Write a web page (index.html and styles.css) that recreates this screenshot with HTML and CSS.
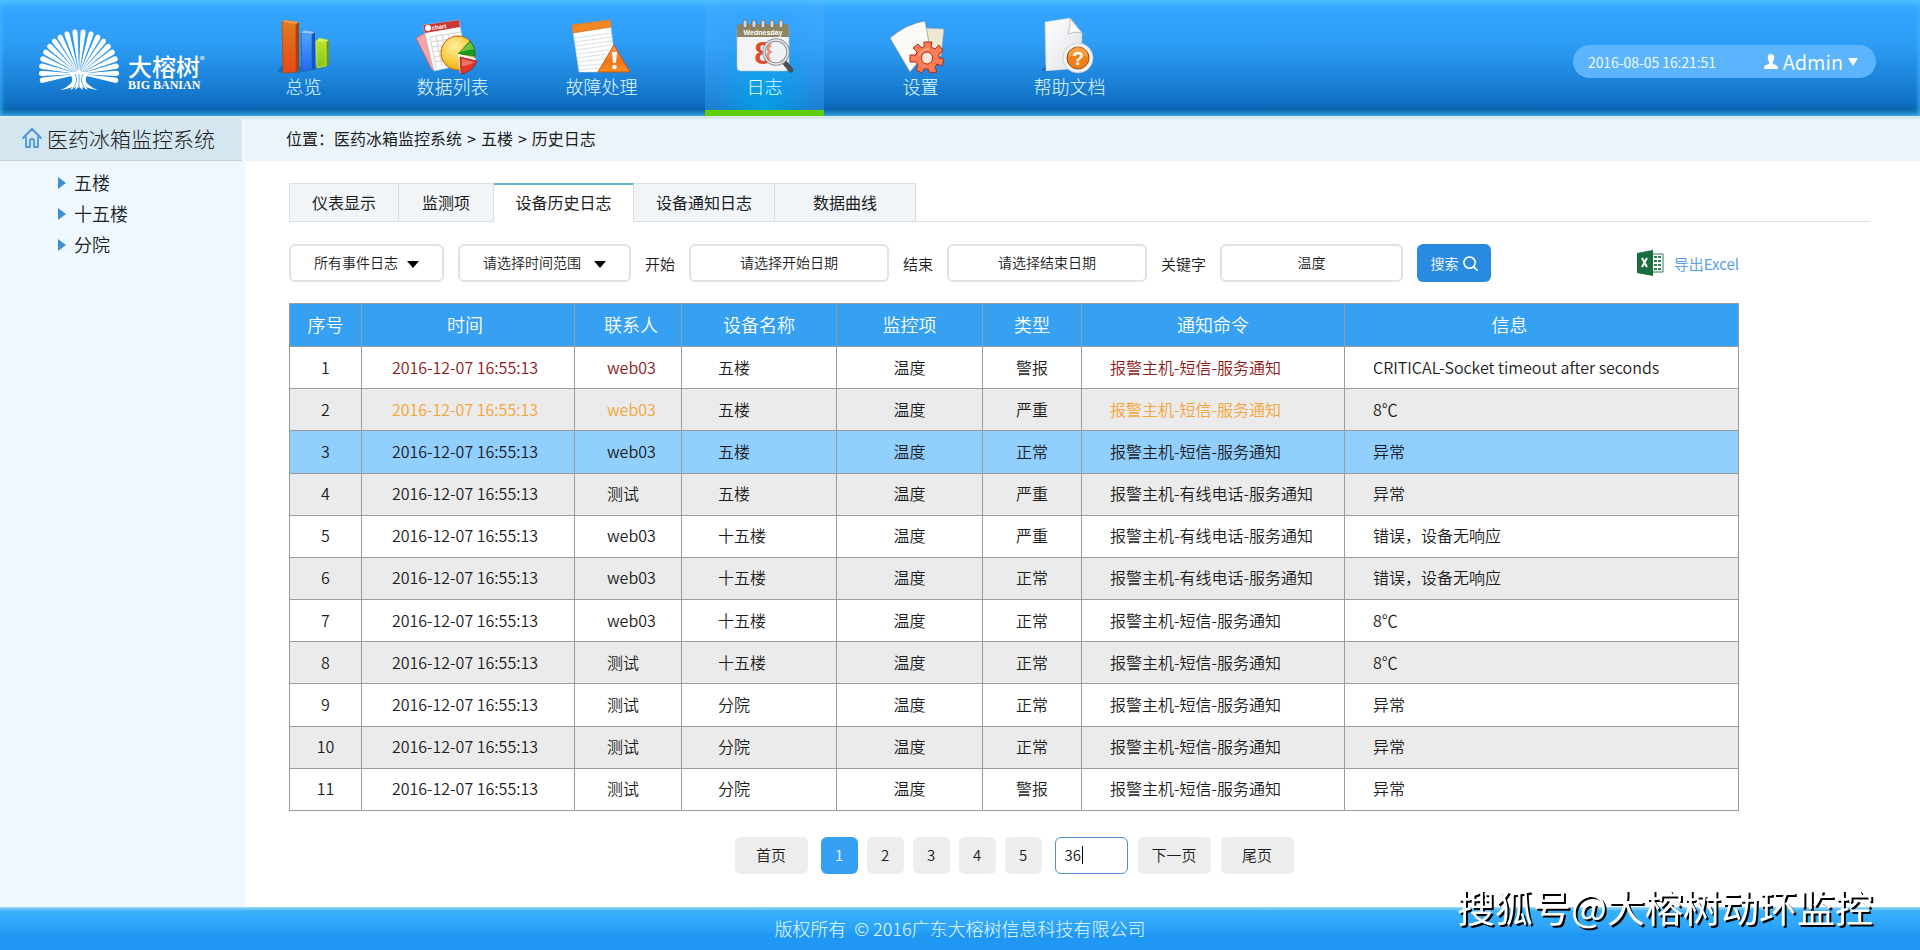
FILE: index.html
```html
<!DOCTYPE html>
<html lang="zh-CN">
<head>
  <meta charset="UTF-8" />
  <meta name="viewport" content="width=device-width, initial-scale=1.0" />
  <title>医药冰箱监控系统</title>
  <link rel="stylesheet" href="styles.css">
</head>
<body>
  <!-- 头部 -->
  <header class="header">
    <a class="logo" href="#">
      <svg class="logo-tree" viewBox="0 0 82 64" aria-hidden="true">
        <defs>
          <path id="leaf" d="M-.3-4 L-2.6-39 a2.6 3.2 0 0 1 5.2 0 L.3-4z" />
        </defs>
        <g fill="#fff" transform="translate(41 47) scale(.98 1.06)">
          <use href="#leaf" transform="rotate(-99) scale(.96)" />
          <use href="#leaf" transform="rotate(-89) scale(.97)" />
          <use href="#leaf" transform="rotate(-79) scale(.98)" />
          <use href="#leaf" transform="rotate(-69)" />
          <use href="#leaf" transform="rotate(-59)" />
          <use href="#leaf" transform="rotate(-49)" />
          <use href="#leaf" transform="rotate(-39)" />
          <use href="#leaf" transform="rotate(-29)" />
          <use href="#leaf" transform="rotate(-18)" />
          <use href="#leaf" transform="rotate(-6)" />
          <use href="#leaf" transform="rotate(6)" />
          <use href="#leaf" transform="rotate(18)" />
          <use href="#leaf" transform="rotate(29)" />
          <use href="#leaf" transform="rotate(39)" />
          <use href="#leaf" transform="rotate(49)" />
          <use href="#leaf" transform="rotate(59)" />
          <use href="#leaf" transform="rotate(69)" />
          <use href="#leaf" transform="rotate(79) scale(.98)" />
          <use href="#leaf" transform="rotate(89) scale(.97)" />
          <use href="#leaf" transform="rotate(99) scale(.96)" />
        </g>
        <path fill="#fff" d="M30 45 Q36 47 41 42 Q46 47 52 45 Q44 53 51 58 Q54 61 60 63 Q52 62 48 60 L50 63 L44 60 L45 63 L41 60 L37 63 L38 60 L32 63 L34 60 Q30 62 22 63 Q28 61 31 58 Q38 53 30 45z" />
        <path fill="none" stroke="#2288dc" stroke-width=".7" d="M37 47 Q41 54 35 61 M45 47 Q41 54 47 61 M41 47 V60" />
      </svg>
      <span class="logo-text">
        <span class="logo-cn">大榕树<sup>®</sup></span>
        <span class="logo-en">BIG BANIAN</span>
      </span>
    </a>

    <nav class="nav">
      <a href="#">
        <svg class="nav-icon" viewBox="0 0 70 56" aria-hidden="true">
          <defs>
            <linearGradient id="barOrange" x1="0" y1="0" x2="0" y2="1"><stop offset="0" stop-color="#e07a1c" /><stop offset="1" stop-color="#e8481a" /></linearGradient>
            <linearGradient id="barBlue" x1="0" y1="0" x2="0" y2="1"><stop offset="0" stop-color="#4fa4fb" /><stop offset="1" stop-color="#2468f2" /></linearGradient>
            <linearGradient id="barGreen" x1="0" y1="0" x2="0" y2="1"><stop offset="0" stop-color="#b9e32c" /><stop offset="1" stop-color="#86c516" /></linearGradient>
          </defs>
          <path fill="#0c4f94" opacity=".45" d="M8 54 L12 48 H59 L55 50 L29 55z" />
          <path fill="#a8400e" d="M13 4 L16 2 L30 4 V52 L27 55z" />
          <path fill="url(#barOrange)" stroke="#b4460e" stroke-width=".8" d="M13 4 L27 5 V54 L14 55z" />
          <path fill="#f0a050" d="M13 4 L16 2 L30 4 L27 6z" />
          <path fill="#1c50b8" d="M32 15 L35 12 L46 14 V50 L43 52z" />
          <path fill="url(#barBlue)" stroke="#2560c8" stroke-width=".8" d="M32 15 L43 16 V51 L33 53z" />
          <path fill="#8cc8ff" d="M32 15 L35 12 L46 14 L43 16z" />
          <path fill="#6a9a10" d="M47 23 L50 20 L60 22 V47 L57 49z" />
          <path fill="url(#barGreen)" stroke="#d6f060" stroke-width=".8" d="M47 23 L57 24 V48 L48 50z" />
          <path fill="#d4ee60" d="M47 23 L50 20 L60 22 L57 24z" />
        </svg>
        <span>总览</span>
      </a>
      <a href="#">
        <svg class="nav-icon" viewBox="3 0 70 56" aria-hidden="true">
          <defs>
            <radialGradient id="pie" cx=".4" cy=".3" r=".8"><stop offset="0" stop-color="#fff0a0" /><stop offset=".6" stop-color="#f8c838" /><stop offset="1" stop-color="#e89a18" /></radialGradient>
          </defs>
          <path fill="#f4a3a8" stroke="#c8505a" stroke-width=".6" d="M1 20 L10 15 L23 49 L17 52z" />
          <path fill="#fdfdfd" stroke="#b8c4d0" stroke-width=".5" d="M8 7 L44 2 L52 46 L19 53z" />
          <path fill="#c93a36" d="M8 7 L44 2 L45 9 L10 15z" />
          <path fill="none" stroke="#c9ccd4" stroke-width=".8" d="M15 19 L46 14 M16 24 L47 19 M17 29 L48 24 M18 34 L40 30 M19 39 L40 35 M20 44 L40 40 M15 19 L21 50 M21 18 L27 48 M27 17 L33 47 M33 16 L37 36 M39 15 L42 30" />
          <circle cx="13" cy="10" r="3" fill="#fff" />
          <text x="17" y="12" class="icon-chart-text" transform="rotate(-8 17 12)">chart</text>
          <circle cx="43" cy="35" r="17" fill="url(#pie)" stroke="#c45a10" />
          <path fill="#159a1e" stroke="#0c7414" stroke-width=".6" d="M43 36 L55 23 Q61 29 60 38z" />
          <path fill="#a6dc5a" opacity=".6" d="M45 34 L55 24 Q58 27 59 31z" />
          <path fill="#fff" d="M43 36 L60 40 L62 44 L45 56z" />
          <path fill="#e0352b" stroke="#9c1812" stroke-width=".8" d="M45 39 L62 43 Q58 54 46 56z" />
          <path fill="#f48a80" opacity=".7" d="M47 41 L59 44 Q56 47 47 48z" />
        </svg>
        <span>数据列表</span>
      </a>
      <a href="#">
        <svg class="nav-icon" viewBox="0 0 70 56" aria-hidden="true">
          <defs>
            <linearGradient id="warn" x1="0" y1="0" x2="0" y2="1"><stop offset="0" stop-color="#ff9d5c" /><stop offset=".6" stop-color="#f4731a" /><stop offset="1" stop-color="#f8901c" /></linearGradient>
          </defs>
          <path fill="#fff" stroke="#c8ccd2" stroke-width=".5" d="M5 7 L43 2 L49 50 L34 54 L12 54z" />
          <path fill="#f28722" stroke="#c96410" stroke-width=".6" d="M5 7 L43 2 L44 9 L6 15z" />
          <path fill="none" stroke="#d5dae0" stroke-width=".9" d="M8 20 L44 15 M8 24 L45 19 M9 28 L45 23 M9 32 L44 27 M10 36 L42 32 M10 40 L40 36 M11 44 L37 41 M11 48 L35 46 M12 52 L33 50" />
          <path fill="url(#warn)" stroke="#c85208" stroke-linejoin="round" d="M47 27 L63 54 H31z" />
          <path fill="#fff" d="M45 34 h5 l-1 11 h-3z" />
          <circle cx="47.500" cy="49" r="2.200" fill="#fff" />
        </svg>
        <span>故障处理</span>
      </a>
      <a href="#" class="active">
        <svg class="nav-icon" viewBox="0 0 70 56" aria-hidden="true">
          <rect x="7" y="8" width="52" height="45" rx="4" fill="#f4f4f6" stroke="#b9bec4" stroke-width=".6" />
          <path fill="#8f8560" d="M7 19 V10 Q7 6 11 6 H55 Q59 6 59 10 V19z" />
          <g fill="#d4d8de" stroke="#59616b" stroke-width=".8">
            <rect x="13" y="2" width="4" height="8" rx="2" />
            <rect x="22" y="2" width="4" height="8" rx="2" />
            <rect x="31" y="2" width="4" height="8" rx="2" />
            <rect x="40" y="2" width="4" height="8" rx="2" />
            <rect x="49" y="2" width="4" height="8" rx="2" />
          </g>
          <text x="33" y="17" class="icon-day-text">Wednesday</text>
          <text x="33" y="46" class="icon-date-text">8</text>
          <path stroke="#4e5054" stroke-width="5" stroke-linecap="round" d="M55 45 L61 52" />
          <circle cx="46" cy="34" r="12" fill="#eef2f6" stroke="#8d9196" stroke-width="3.500" />
          <circle cx="46" cy="34" r="12" fill="none" stroke="#e6e8ea" stroke-width="1.500" />
          <path fill="none" stroke="#e8694a" stroke-width="3" opacity=".7" d="M41 27 Q36 30 40 34 Q35 38 40 42" />
        </svg>
        <span>日志</span>
      </a>
      <a href="#">
        <svg class="nav-icon" viewBox="0 0 70 56" aria-hidden="true">
          <path fill="#efe8d2" stroke="#8c9aa4" stroke-width=".5" d="M40 10 L58 11 L55 38 L40 42z" />
          <path fill="#fcfaf4" stroke="#6e8496" stroke-width=".6" d="M4 20 Q20 6 39 3 L44 30 L24 54 Q12 34 4 20z" />
          <path fill="#f77e55" stroke="#b3261a" stroke-linejoin="round" d="M38 24 L46 24 L45 29 L49 31 L53 27 L57 33 L53 36 L53 40 L58 41 L56 48 L51 46 L49 49 L51 54 L44 55 L42 51 L38 51 L36 55 L30 52 L32 47 L30 44 L24 44 L24 37 L30 37 L31 34 L27 30 L32 26 L36 30 L38 29z" />
          <ellipse cx="41" cy="40" rx="5.500" ry="6" fill="#f5ead8" stroke="#b3261a" />
          <path fill="none" stroke="#ffc2a0" stroke-width="1" d="M33 38 Q35 31 43 31" />
        </svg>
        <span>设置</span>
      </a>
      <a href="#">
        <svg class="nav-icon" viewBox="2 0 70 56" aria-hidden="true">
          <defs>
            <linearGradient id="page" x1="0" y1="0" x2="1" y2="1"><stop offset="0" stop-color="#fff" /><stop offset="1" stop-color="#dde1e6" /></linearGradient>
          </defs>
          <path fill="#0c4f94" opacity=".5" d="M8 52 L14 46 L40 49 L14 54z" />
          <path fill="url(#page)" stroke="#c8ced6" stroke-width=".5" d="M12 4 L37 0 L49 15 L48 50 L13 53z" />
          <path fill="#fafafa" stroke="#a8aeb6" stroke-width=".7" d="M37 0 L49 15 Q42 13 35 16 Q38 8 37 0z" />
          <circle cx="45" cy="40" r="15" fill="#f2f2f2" stroke="#bfc4ca" stroke-width=".6" />
          <circle cx="45" cy="40" r="11" fill="#ef7f16" stroke="#9c4a08" />
          <path fill="#ffb35c" opacity=".6" d="M35 39 a10 10 0 0 1 20 0 Q45 35 35 39z" />
          <text x="45" y="47" class="icon-help-text">?</text>
        </svg>
        <span>帮助文档</span>
      </a>
    </nav>

    <div class="user-bar">
      <time datetime="2016-08-05T16:21:51">2016-08-05 16:21:51</time>
      <button class="user-btn" type="button">
        <svg class="user-icon" viewBox="0 0 14 15" aria-hidden="true"><path fill="#fff" d="M7 0 C9.500 0 10.500 2 10.200 4.300 C10 6 9.500 7 8.800 8 C8.600 9.800 9 10 11 10.800 C13 11.500 14 12 14 15 H0 C0 12 1 11.500 3 10.800 C5 10 5.400 9.800 5.200 8 C4.500 7 4 6 3.800 4.300 C3.500 2 4.500 0 7 0z" /></svg>
        Admin
        <span class="caret"></span>
      </button>
    </div>
  </header>

  <div class="container">
    <!-- 侧边栏 -->
    <aside class="sidebar">
      <h1 class="sidebar-title">
        <svg class="home-icon" viewBox="0 0 20 20" aria-hidden="true"><path fill="none" stroke="#4a97d8" stroke-width="1.800" stroke-linejoin="round" stroke-linecap="round" d="M1 10 L10 1 L19 10 M4 9 V19 H8 V13 Q8 11 10 11 Q12 11 12 13 V19 H16 V9" /></svg>
        医药冰箱监控系统
      </h1>
      <ul class="tree">
        <li><a href="#">五楼</a></li>
        <li><a href="#">十五楼</a></li>
        <li><a href="#">分院</a></li>
      </ul>
    </aside>

    <!-- 内容 -->
    <main class="main">
      <div class="breadcrumb">
        <span>位置：医药冰箱监控系统</span><span>&gt;</span><span>五楼</span><span>&gt;</span><span>历史日志</span>
      </div>

      <div class="tabs">
        <a href="#" class="tab tab-gauge">仪表显示</a>
        <a href="#" class="tab tab-item">监测项</a>
        <a href="#" class="tab tab-history active">设备历史日志</a>
        <a href="#" class="tab tab-notice">设备通知日志</a>
        <a href="#" class="tab tab-curve">数据曲线</a>
      </div>

      <div class="panel">
        <form class="filter">
          <div class="select-box select-event">
            <select aria-label="事件日志"><option>所有事件日志</option></select>
          </div>
          <div class="select-box select-range">
            <select aria-label="时间范围"><option>请选择时间范围</option></select>
          </div>
          <label for="start">开始</label>
          <input class="date-input" id="start" type="text" placeholder="请选择开始日期">
          <label for="end">结束</label>
          <input class="date-input" id="end" type="text" placeholder="请选择结束日期">
          <label for="keyword">关键字</label>
          <input class="keyword-input" id="keyword" type="text" value="温度">
          <button class="search-btn" type="button">搜索
            <svg class="search-icon" viewBox="0 0 16 16" aria-hidden="true"><path fill="none" stroke="#fff" stroke-width="1.700" stroke-linecap="round" d="M11 11 L15 15 M7 1 a6 6 0 1 0 .01 0z" /></svg>
          </button>
          <a class="export" href="#">
            <svg class="excel-icon" viewBox="0 0 27 26" aria-hidden="true">
              <path fill="#fff" stroke="#2f7d51" d="M14 4 H26 V22 H14z" />
              <path fill="#2f7d51" d="M17 6h3v2h-3z M21 6h3v2h-3z M17 10h3v2h-3z M21 10h3v2h-3z M17 14h3v2h-3z M21 14h3v2h-3z M17 18h3v2h-3z M21 18h3v2h-3z" />
              <path fill="#1a6e3d" d="M0 3 L16 0 V26 L0 23z" />
              <path fill="none" stroke="#fff" stroke-width="2" d="M5 8 L10 17 M10 8 L5 17" />
            </svg>
            导出Excel
          </a>
        </form>

        <table class="log-table">
          <colgroup>
            <col class="c-no"><col class="c-time"><col class="c-user"><col class="c-device">
            <col class="c-item"><col class="c-type"><col class="c-cmd"><col>
          </colgroup>
          <thead>
            <tr><th>序号</th><th>时间</th><th>联系人</th><th>设备名称</th><th>监控项</th><th>类型</th><th>通知命令</th><th>信息</th></tr>
          </thead>
          <tbody>
            <tr class="alarm"><td>1</td><td>2016-12-07 16:55:13</td><td>web03</td><td>五楼</td><td>温度</td><td>警报</td><td>报警主机-短信-服务通知</td><td>CRITICAL-Socket timeout after seconds</td></tr>
            <tr class="serious"><td>2</td><td>2016-12-07 16:55:13</td><td>web03</td><td>五楼</td><td>温度</td><td>严重</td><td>报警主机-短信-服务通知</td><td>8℃</td></tr>
            <tr class="selected"><td>3</td><td>2016-12-07 16:55:13</td><td>web03</td><td>五楼</td><td>温度</td><td>正常</td><td>报警主机-短信-服务通知</td><td>异常</td></tr>
            <tr><td>4</td><td>2016-12-07 16:55:13</td><td>测试</td><td>五楼</td><td>温度</td><td>严重</td><td>报警主机-有线电话-服务通知</td><td>异常</td></tr>
            <tr><td>5</td><td>2016-12-07 16:55:13</td><td>web03</td><td>十五楼</td><td>温度</td><td>严重</td><td>报警主机-有线电话-服务通知</td><td>错误，设备无响应</td></tr>
            <tr><td>6</td><td>2016-12-07 16:55:13</td><td>web03</td><td>十五楼</td><td>温度</td><td>正常</td><td>报警主机-有线电话-服务通知</td><td>错误，设备无响应</td></tr>
            <tr><td>7</td><td>2016-12-07 16:55:13</td><td>web03</td><td>十五楼</td><td>温度</td><td>正常</td><td>报警主机-短信-服务通知</td><td>8℃</td></tr>
            <tr><td>8</td><td>2016-12-07 16:55:13</td><td>测试</td><td>十五楼</td><td>温度</td><td>正常</td><td>报警主机-短信-服务通知</td><td>8℃</td></tr>
            <tr><td>9</td><td>2016-12-07 16:55:13</td><td>测试</td><td>分院</td><td>温度</td><td>正常</td><td>报警主机-短信-服务通知</td><td>异常</td></tr>
            <tr><td>10</td><td>2016-12-07 16:55:13</td><td>测试</td><td>分院</td><td>温度</td><td>正常</td><td>报警主机-短信-服务通知</td><td>异常</td></tr>
            <tr><td>11</td><td>2016-12-07 16:55:13</td><td>测试</td><td>分院</td><td>温度</td><td>警报</td><td>报警主机-短信-服务通知</td><td>异常</td></tr>
          </tbody>
        </table>

        <div class="pager">
          <button class="page-wide" type="button">首页</button>
          <div class="page-list">
            <button class="page-num active" type="button">1</button>
            <button class="page-num" type="button">2</button>
            <button class="page-num" type="button">3</button>
            <button class="page-num" type="button">4</button>
            <button class="page-num" type="button">5</button>
          </div>
          <div class="page-jump">
            <input class="page-input" type="text" value="36" aria-label="页码">
          </div>
          <button class="page-wide" type="button">下一页</button>
          <button class="page-wide" type="button">尾页</button>
        </div>
      </div>
    </main>
  </div>

  <!-- 底部 -->
  <footer class="footer">
    <p>版权所有 &nbsp;© 2016广东大榕树信息科技有限公司</p>
  </footer>
  <div class="watermark">搜狐号@大榕树动环监控</div>
</body>
</html>
```
FILE: styles.css
```css
:root {
  --blue: #36a0f3;
  --btn-blue: #288be1;
  --border: #e2e2e2;
  --line: #9c9c9c;
  --text: #1c1c1c;
}

* {
  box-sizing: border-box;
  margin: 0;
  padding: 0;
}

body {
  font-family: "Noto Sans CJK SC", "Noto Sans", sans-serif;
  font-size: 16px;
  font-weight: 350;
  color: var(--text);
  background: #fff;
  min-height: 100vh;
  display: flex;
  flex-direction: column;
}

a {
  color: inherit;
  text-decoration: none;
}

button,
input,
select {
  font: inherit;
  color: inherit;
}

/* 头部 */
.header {
  height: 119px;
  display: flex;
  border-bottom: 3px solid #dae8ef;
  background: linear-gradient(#53c3ff 0, #37aaff 6px, #33a4ff 14px, #2d9cf4 45px, #1c83d9 80px, #0f70c4 102px, #0b66b0 109px, #2a8fca 116px);
  box-shadow: inset 2px 0 4px rgba(70, 190, 255, .6), inset -2px 0 4px rgba(70, 190, 255, .6);
}

.logo {
  width: 244px;
  display: flex;
  padding: 27px 0 0 38px;
  color: #fff;
}

.logo-tree {
  width: 82px;
  height: 64px;
}

.logo-text {
  display: flex;
  flex-direction: column;
  padding: 25px 0 0 8px;
}

.logo-cn {
  font-size: 24px;
  line-height: 27px;
  font-weight: 500;
  white-space: nowrap;
}

.logo-cn sup {
  font-size: 9px;
  line-height: 9px;
  vertical-align: 13px;
}

.logo-en {
  font: bold 12px/12px "Liberation Serif", serif;
}

.nav {
  display: flex;
  gap: 30px;
}

.nav a {
  width: 119px;
  height: 116px;
  padding-top: 18px;
  display: flex;
  flex-direction: column;
  align-items: center;
  color: #e6fdff;
  font-size: 18px;
  font-weight: 300;
  line-height: 24px;
}

.nav a.active {
  margin: 0 7px 0 14px;
  border-bottom: 6px solid #62ce0b;
  background: radial-gradient(ellipse at 50% 100%, rgba(0, 180, 245, .7), rgba(60, 170, 255, .35) 60%, rgba(90, 180, 255, .3));
}

.nav-icon {
  width: 70px;
  height: 56px;
  overflow: visible;
  flex-shrink: 0;
}

.icon-chart-text {
  font: bold 6px "Liberation Sans", sans-serif;
  fill: #fff;
}

.icon-day-text {
  font: bold 7px "Liberation Sans", sans-serif;
  fill: #fff;
  text-anchor: middle;
}

.icon-date-text {
  font: bold 31px "Liberation Sans", sans-serif;
  fill: #e0492a;
  text-anchor: middle;
}

.icon-help-text {
  font: bold 19px "Liberation Sans", sans-serif;
  fill: #fff;
  text-anchor: middle;
}

.user-bar {
  width: 303px;
  height: 33px;
  margin: 45px 44px 0 auto;
  padding: 0 18px 0 15px;
  border-radius: 17px;
  background: #5cb4fd;
  color: #fff;
  font-size: 14px;
  display: flex;
  align-items: center;
  justify-content: space-between;
}

.user-btn {
  display: flex;
  align-items: center;
  gap: 5px;
  border: none;
  background: none;
  font-size: 20px;
  line-height: 30px;
  cursor: pointer;
}

.user-icon {
  width: 14px;
  height: 15px;
}

.caret {
  border: 5px solid transparent;
  border-top: 8px solid #fff;
  border-bottom: 0;
}

/* 侧边栏 */
.container {
  flex: 1;
  display: flex;
}

.sidebar {
  width: 245px;
  flex-shrink: 0;
  background: #eff8ff;
}

.sidebar-title {
  height: 42px;
  margin-right: 3px;
  padding: 0 0 4px 22px;
  border-bottom: 1px solid #c3d3dd;
  background: #d4e6ef;
  display: flex;
  align-items: center;
  gap: 5px;
  font-size: 21px;
  font-weight: 300;
  white-space: nowrap;
}

.home-icon {
  width: 20px;
  height: 20px;
}

.tree {
  list-style: none;
  padding: 6px 0 0 58px;
}

.tree a {
  display: flex;
  align-items: center;
  gap: 8px;
  font-size: 18px;
  line-height: 31px;
}

.tree a::before {
  content: "";
  border: 6px solid transparent;
  border-left: 8px solid #3f8fd2;
  border-right: 0;
}

/* 内容 */
.main {
  flex: 1;
  min-width: 0;
}

.breadcrumb {
  height: 42px;
  padding-left: 41px;
  display: flex;
  gap: 5px;
  background: #ebf4fb;
  border-bottom: 1px solid #eceef3;
  font-weight: 400;
  line-height: 38px;
}

.tabs {
  display: flex;
  margin: 22px 50px 0 44px;
  border-bottom: 1px solid #d9e0e4;
}

.tab {
  height: 39px;
  margin-bottom: -1px;
  border: 1px solid #d9e0e4;
  border-left: none;
  background: #f1f5f8;
  font-weight: 400;
  line-height: 36px;
  text-align: center;
}

.tab-gauge {
  width: 110px;
  border-left: 1px solid #d9e0e4;
}

.tab-item {
  width: 95px;
}

.tab-history {
  width: 140px;
}

.tab-notice,
.tab-curve {
  width: 141px;
}

.tab.active {
  border-top: 2px solid #65b4ce;
  border-bottom-color: #fff;
  background: #fff;
  line-height: 34px;
}

.panel {
  margin: 22px 181px 33px 44px;
}

.filter {
  display: flex;
  align-items: center;
  gap: 14px;
  font-size: 14px;
  white-space: nowrap;
}

.filter label {
  font-size: 15px;
}

.filter select,
.filter input {
  width: 100%;
  height: 38px;
  padding-bottom: 2px;
  border: 2px solid var(--border);
  border-radius: 6px;
  background: #fff;
}

.filter input {
  text-align: center;
}

.filter input::placeholder {
  color: var(--text);
  opacity: 1;
}

.select-box {
  position: relative;
}

.select-box select {
  appearance: none;
  padding-left: 23px;
}

.select-box::after {
  content: "";
  position: absolute;
  right: 25px;
  top: 17px;
  border: 6px solid transparent;
  border-top: 7px solid #000;
  border-bottom: 0;
  pointer-events: none;
}

.select-event {
  width: 155px;
}

.select-range {
  width: 173px;
}

.filter .date-input {
  width: 200px;
}

.filter .keyword-input {
  width: 183px;
}

.search-btn {
  width: 74px;
  height: 38px;
  border: none;
  border-radius: 6px;
  background: var(--btn-blue);
  color: #fff;
  display: flex;
  align-items: center;
  justify-content: center;
  gap: 4px;
  cursor: pointer;
}

.search-icon {
  width: 15px;
  height: 15px;
}

.export {
  margin-left: auto;
  display: flex;
  align-items: center;
  gap: 10px;
  color: #5aa2e4;
  font-size: 15px;
  font-weight: 400;
}

.excel-icon {
  width: 27px;
  height: 26px;
}

.log-table {
  width: 100%;
  height: 508px;
  margin-top: 21px;
  table-layout: fixed;
  border-collapse: collapse;
}

.c-no { width: 72px; }
.c-time { width: 213px; }
.c-user { width: 107px; }
.c-device { width: 155px; }
.c-item { width: 146px; }
.c-type { width: 99px; }
.c-cmd { width: 263px; }

.log-table th,
.log-table td {
  border: 1px solid var(--line);
  height: 42px;
  padding-bottom: 2px;
  text-align: center;
  white-space: nowrap;
}

.log-table th {
  height: 43px;
  padding-bottom: 3px;
  background: var(--blue);
  color: #fff;
  font-size: 18px;
  font-weight: 350;
}

.log-table th:nth-child(2),
.log-table td:nth-child(2) {
  padding-right: 6px;
}

.log-table th:nth-child(3) {
  padding-left: 6px;
}

.log-table th:nth-child(8) {
  padding-right: 64px;
}

.log-table tbody tr:nth-child(even) {
  background: #ebebeb;
}

.log-table tbody tr.selected {
  background: #91cfff;
}

.log-table td:nth-child(3),
.log-table td:nth-child(4),
.log-table td:nth-child(7),
.log-table td:nth-child(8) {
  text-align: left;
}

.log-table td:nth-child(3) {
  padding-left: 32px;
}

.log-table td:nth-child(4) {
  padding-left: 36px;
}

.log-table td:nth-child(7),
.log-table td:nth-child(8) {
  padding-left: 28px;
}

.alarm td:nth-child(2),
.alarm td:nth-child(3),
.alarm td:nth-child(7) {
  color: #8c1a20;
}

.serious td:nth-child(2),
.serious td:nth-child(3),
.serious td:nth-child(7) {
  color: #f5a436;
}

/* 分页 */
.pager {
  margin-top: 26px;
  display: flex;
  justify-content: center;
  gap: 10px;
  font-size: 15px;
}

.page-list {
  display: flex;
  gap: 9px;
  margin: 0 3px;
}

.pager button {
  height: 37px;
  padding-bottom: 2px;
  border: none;
  border-radius: 6px;
  background: #ededed;
  cursor: pointer;
}

.pager .page-wide {
  width: 73px;
}

.pager .page-num {
  width: 37px;
}

.pager .page-num.active {
  background: var(--blue);
  color: #fff;
}

.page-jump {
  position: relative;
}

/* 光标 */
.page-jump::after {
  content: "";
  position: absolute;
  left: 27px;
  top: 9px;
  width: 1px;
  height: 18px;
  background: #000;
}

.page-input {
  width: 73px;
  height: 37px;
  padding: 0 0 2px 9px;
  border: 1px solid #4d8fd0;
  border-radius: 6px;
  outline: none;
}

/* 底部 */
.footer {
  height: 43px;
  background: linear-gradient(#9fdcf8 0, #3cb0f5 4px, #35aefa 8px, #2ba2f7 22px, #2097f3 28px, #2097f3 100%);
  color: #e6fdff;
  font-size: 18px;
  font-weight: 300;
  line-height: 42px;
  text-align: center;
}

.watermark {
  position: fixed;
  right: 47px;
  bottom: 16px;
  color: #fff;
  font-size: 38px;
  font-weight: 400;
  line-height: 56px;
  text-shadow: 2px 2px 0 #000;
  white-space: nowrap;
}
```
